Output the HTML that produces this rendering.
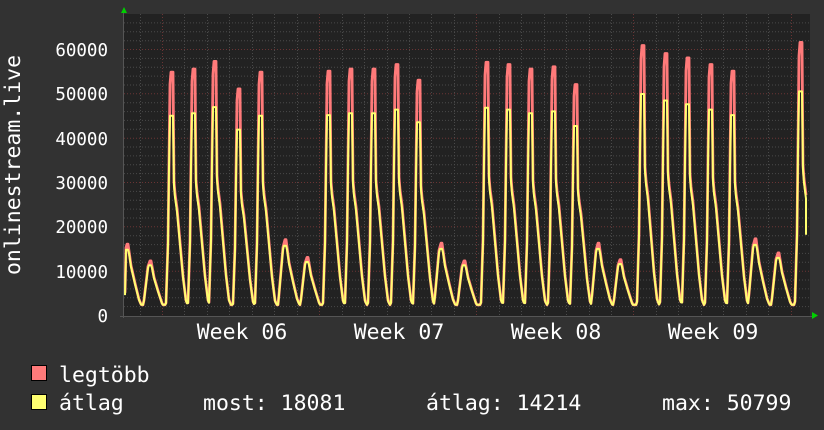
<!DOCTYPE html>
<html><head><meta charset="utf-8"><style>
html,body{margin:0;padding:0;background:#323232;width:824px;height:430px;overflow:hidden}
svg{display:block}
text{font-family:"DejaVu Sans Mono","Liberation Mono",monospace;fill:#fff;font-size:21.5px}
.yl{font-size:17.5px}
</style></head><body>
<svg id="g" width="824" height="430" xmlns="http://www.w3.org/2000/svg">
<rect x="0" y="0" width="824" height="430" fill="#323232"/>
<rect x="124" y="14" width="686" height="302" fill="#222"/>
<g id="grid"></g>
<path id="red" fill="none" stroke="#ff7a7a" stroke-width="2.8" stroke-linejoin="round"/>
<path id="yel" fill="none" stroke="#ffff70" stroke-width="2" stroke-linejoin="round"/>
<line x1="123.5" y1="12" x2="123.5" y2="318" stroke="#555" stroke-width="1"/>
<line x1="120" y1="316.5" x2="812" y2="316.5" stroke="#555" stroke-width="1"/>
<polygon points="121,13 127,13 124,7" fill="#00d000"/>
<polygon points="812,312 812,319 818,315.5" fill="#00d000"/>
<g text-anchor="end" class="yl">
<text class="yl" x="108" y="56">60000</text>
<text class="yl" x="108" y="100">50000</text>
<text class="yl" x="108" y="145">40000</text>
<text class="yl" x="108" y="189">30000</text>
<text class="yl" x="108" y="233">20000</text>
<text class="yl" x="108" y="278">10000</text>
<text class="yl" x="108" y="322">0</text>
</g>
<text transform="translate(20,165) rotate(-90)" text-anchor="middle">onlinestream.live</text>
<g text-anchor="middle">
<text x="242" y="339">Week 06</text>
<text x="399" y="339">Week 07</text>
<text x="556" y="339">Week 08</text>
<text x="713" y="339">Week 09</text>
</g>
<rect x="31.5" y="365.5" width="15" height="15" fill="#ff7a7a" stroke="#000"/>
<rect x="31.5" y="394.5" width="15" height="15" fill="#ffff70" stroke="#000"/>
<text x="59" y="382">legtöbb</text>
<text x="59" y="410">átlag</text>
<text x="203" y="410">most: 18081</text>
<text x="426" y="410">átlag: 14214</text>
<text x="662" y="410">max: 50799</text>
</svg>
<script>
(function(){
var g=document.getElementById('grid'),s='';
function Y(v){return 315-v*44.33/10000;}
for(var v=2000;v<=68000;v+=2000){var y=Y(v);if(y<14)break;var maj=v%10000==0;
s+='<line x1="124" x2="810" y1="'+(y+0.5).toFixed(1)+'" y2="'+(y+0.5).toFixed(1)+'" stroke="'+(maj?'#6a3434':'#4a4a4a')+'" stroke-dasharray="1,2"/>';}
for(var i=-2;i<32;i++){var x=162+i*22.45;if(x<125||x>809)continue;var maj=((i%7)+7)%7==0;
s+='<line y1="14" y2="316" x1="'+(Math.round(x)+0.5)+'" x2="'+(Math.round(x)+0.5)+'" stroke="'+(maj?'#6a3434':'#4a4a4a')+'" stroke-dasharray="1,2"/>';}
g.innerHTML=s;
var days=[[127,16000,0],[150,12200,0],[171,54800,1],[193,55500,1],[214,57200,1],[238,51000,1],[260,54800,1],[285,17000,0],[307,13000,0],[328,55000,1],[350,55500,1],[373,55500,1],[396,56500,1],[418,53000,1],[441,16200,0],[464,12200,0],[486,57000,1],[508,56500,1],[530,55500,1],[553,56000,1],[575,52000,1],[598,16200,0],[620,12500,0],[642,60800,1],[665,59000,1],[687,58000,1],[710,56500,1],[732,55000,1],[755,17200,0],[778,14000,0],[800,61500,1]];
var big=[[-5,0.05],[-3,0.3],[-1,0.95],[0,1],[2,1],[3,0.55],[4,0.5],[6,0.44],[9,0.3],[12,0.16],[15,0.06],[17,0.04]];
var sm=[[-7,0.12],[-2,0.9],[0,1],[1,1],[4,0.7],[8,0.45],[12,0.22],[15,0.12],[17,0.08]];
function prof(p,dx){if(dx<p[0][0]||dx>p[p.length-1][0])return 0;for(var k=1;k<p.length;k++){if(dx<=p[k][0]){var a=p[k-1],b=p[k];return a[1]+(b[1]-a[1])*(dx-a[0])/(b[0]-a[0]);}}return 0;}
var r='',yy='';
for(var x=125;x<=806;x++){var vr=2300,vy=2300;
for(var i=0;i<days.length;i++){var d=days[i],f=prof(d[2]?big:sm,x-d[0]);var v=f*d[1];if(v>vr)vr=v;
var py=d[2]?d[1]*0.82:d[1]*0.92;var w=Math.min(v*0.97,py);if(w>vy)vy=w;}
if(x==125){vr=5000;vy=4500;}
if(x>=804){vr=Math.max(vr,29000-(x-804)*3000);vy=Math.max(vy,26000-(x-804)*3000);}
r+=(x==125?'M':'L')+x+','+Y(vr).toFixed(1);yy+=(x==125?'M':'L')+x+','+Y(vy).toFixed(1);}
yy+='L806,'+Y(18081).toFixed(1);
document.getElementById('red').setAttribute('d',r);document.getElementById('yel').setAttribute('d',yy);
})();
</script>
</body></html>
